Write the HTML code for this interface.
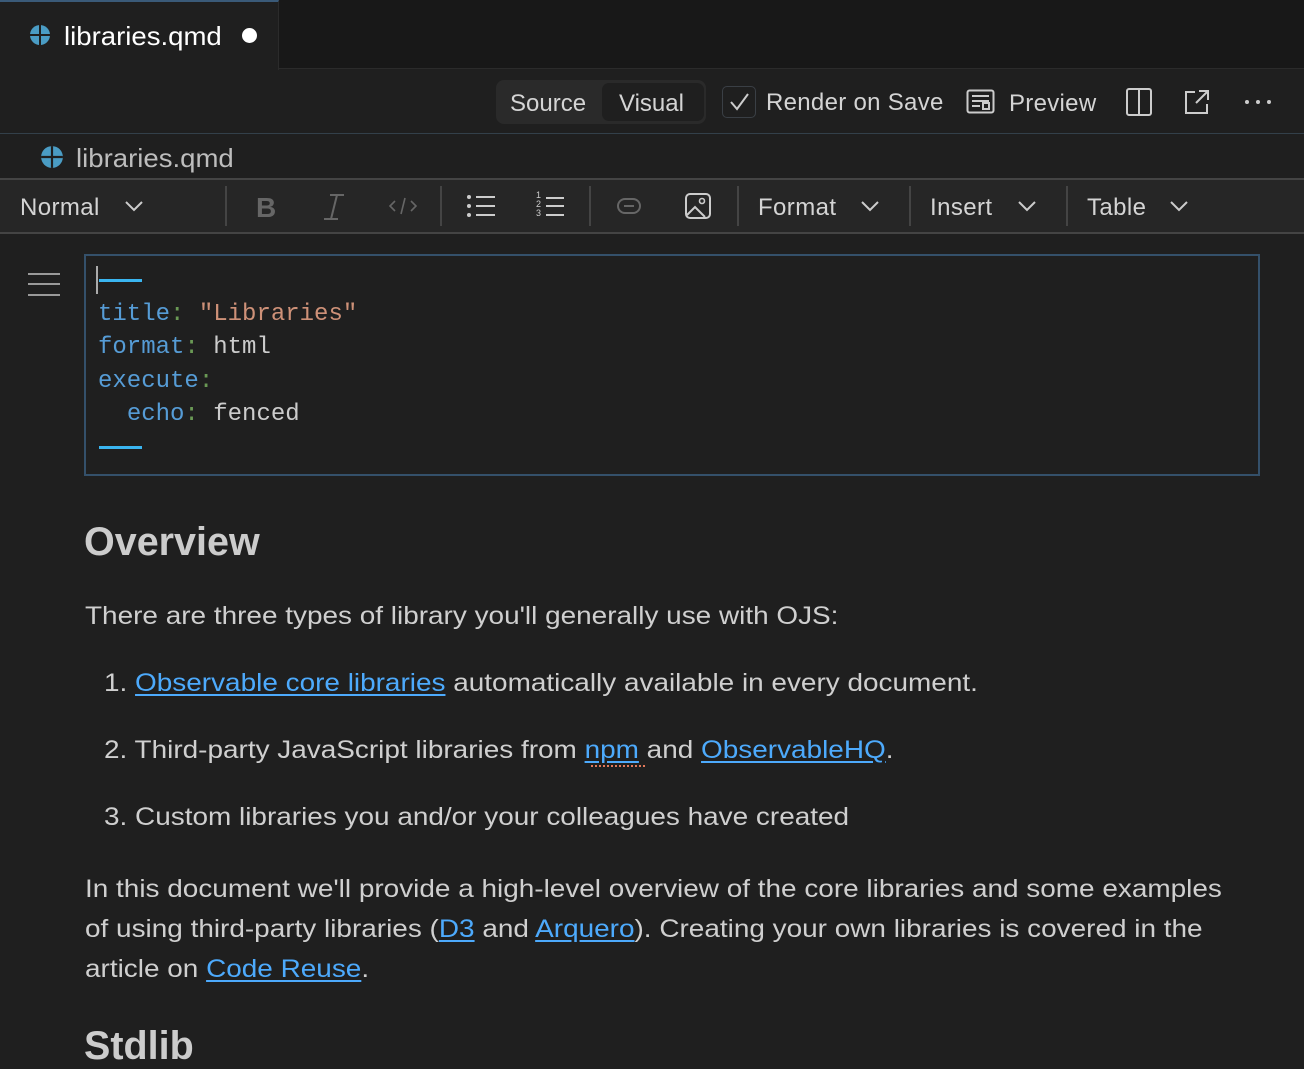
<!DOCTYPE html>
<html><head><meta charset="utf-8"><style>
*{margin:0;padding:0;box-sizing:border-box}
body{width:1304px;height:1046px;background:#1f1f1f;font-family:"Liberation Sans",Arial,sans-serif;color:#cccccc;position:relative;overflow:hidden}
.a{position:absolute;white-space:nowrap}
.t{font-size:25px;color:#cfcfcf;line-height:1;transform:scaleX(1.117);transform-origin:0 0}
a{color:#4daafc;text-decoration:underline;text-underline-offset:3px}
.m{font-family:"Liberation Mono",monospace;font-size:24px;line-height:1;white-space:pre}
.k{color:#569cd6}.c{color:#6a9955}.s{color:#ce9178}.d{color:#3ab5f0}
svg{position:absolute}
</style></head><body>
<div class="a" style="left:0;top:0;width:1304px;height:69px;background:#181818;border-bottom:1px solid #2b2b2b"></div>
<div class="a" style="left:0;top:0;width:279px;height:70px;background:#1f1f1f;border-top:2px solid #3a5a78;border-right:1px solid #2b2b2b"></div>
<svg style="left:29px;top:24px" width="22" height="22" viewBox="0 0 22 22"><circle cx="11" cy="11" r="10" fill="#4a9cc4"/><path d="M11 1v20M1 11h20" stroke="#1f1f1f" stroke-width="2"/></svg>
<div class="a" style="left:64px;top:21px;font-size:26px;color:#fff;transform:scaleX(1.06);transform-origin:0 0">libraries.qmd</div>
<div class="a" style="left:242px;top:28px;width:15px;height:15px;border-radius:50%;background:#fff"></div>

<div class="a" style="left:0;top:133px;width:1304px;height:1px;background:#33404a"></div>
<div class="a" style="left:496px;top:80px;width:210px;height:44px;border-radius:8px;background:#2a2a2a"></div>
<div class="a" style="left:602px;top:83px;width:102px;height:38px;border-radius:7px;background:#1f1f1f"></div>
<div class="a" style="left:510px;top:90px;font-size:24px;color:#d4d4d4">Source</div>
<div class="a" style="left:619px;top:90px;font-size:24px;color:#d4d4d4">Visual</div>
<div class="a" style="left:722px;top:86px;width:34px;height:32px;border:1px solid #3a3f45;border-radius:5px"></div>
<svg style="left:726px;top:90px" width="26" height="24"><path d="M5 12l6 7 11-15" stroke="#ccc" stroke-width="2" fill="none"/></svg>
<div class="a" style="left:766px;top:89px;font-size:24px;color:#d4d4d4;letter-spacing:0.3px">Render on Save</div>
<svg style="left:966px;top:89px" width="30" height="26"><rect x="1.5" y="1.5" width="26" height="22" rx="2" stroke="#ccc" stroke-width="2" fill="none"/><path d="M6 7h17M6 12h17v0M6 17h8M17 14h6v6h-6z" stroke="#ccc" stroke-width="2" fill="none"/></svg>
<div class="a" style="left:1009px;top:90px;font-size:24px;color:#d4d4d4;letter-spacing:0.3px">Preview</div>
<svg style="left:1125px;top:87px" width="28" height="30"><rect x="2" y="2" width="24" height="26" rx="2" stroke="#ccc" stroke-width="2" fill="none"/><path d="M14 2v26" stroke="#ccc" stroke-width="2"/></svg>
<svg style="left:1183px;top:88px" width="30" height="28"><path d="M12 4H3v21h21v-9M16 3h9v9M25 3L13 15" stroke="#ccc" stroke-width="2" fill="none"/></svg>
<div class="a" style="left:1245px;top:100px;width:4px;height:4px;border-radius:2px;background:#ccc;box-shadow:11px 0 #ccc,22px 0 #ccc"></div>

<svg style="left:40px;top:145px" width="24" height="24" viewBox="0 0 22 22"><circle cx="11" cy="11" r="10" fill="#4a9cc4"/><path d="M11 1v20M1 11h20" stroke="#1f1f1f" stroke-width="2"/></svg>
<div class="a" style="left:76px;top:143px;font-size:26px;color:#bdbdbd;transform:scaleX(1.06);transform-origin:0 0">libraries.qmd</div>

<div class="a" style="left:0;top:178px;width:1304px;height:56px;background:#262626;border-top:2px solid #444;border-bottom:2px solid #444"></div>
<div class="a" style="left:20px;top:194px;font-size:24px;color:#d4d4d4;letter-spacing:0.4px">Normal</div>
<svg style="left:124px;top:199px" width="20" height="14"><path d="M2 3l8 8 8-8" stroke="#ccc" stroke-width="2" fill="none"/></svg>
<div class="a" style="left:225px;top:186px;width:2px;height:40px;background:#444"></div>
<div class="a" style="left:256px;top:192px;font-size:28px;font-weight:bold;color:#666">B</div>
<svg style="left:322px;top:193px" width="24" height="28"><path d="M8 2h14M2 26h14M15 2L9 26" stroke="#666" stroke-width="2" fill="none"/></svg>
<svg style="left:388px;top:195px" width="30" height="22"><path d="M7 6l-5 5 5 5M23 6l5 5-5 5M17 3l-4 16" stroke="#666" stroke-width="1.6" fill="none"/></svg>
<div class="a" style="left:440px;top:186px;width:2px;height:40px;background:#444"></div>
<svg style="left:466px;top:194px" width="32" height="26"><g fill="#ccc"><circle cx="3" cy="3" r="2"/><circle cx="3" cy="12" r="2"/><circle cx="3" cy="21" r="2"/></g><path d="M10 3h19M10 12h19M10 21h19" stroke="#ccc" stroke-width="2"/></svg>
<div class="a" style="left:536px;top:191px;font-size:9px;line-height:9px;color:#ccc;text-align:center">1<br>2<br>3</div>
<svg style="left:544px;top:194px" width="22" height="26"><path d="M2 4h18M2 12h18M2 21h18" stroke="#ccc" stroke-width="2"/></svg>
<div class="a" style="left:589px;top:186px;width:2px;height:40px;background:#444"></div>
<svg style="left:616px;top:196px" width="28" height="20"><rect x="2" y="3" width="22" height="14" rx="7" stroke="#666" stroke-width="2" fill="none"/><path d="M8 10h10" stroke="#666" stroke-width="2"/></svg>
<svg style="left:684px;top:192px" width="28" height="28"><rect x="2" y="2" width="24" height="24" rx="4" stroke="#ccc" stroke-width="2" fill="none"/><circle cx="18" cy="9" r="2.5" stroke="#ccc" stroke-width="1.6" fill="none"/><path d="M3 23l8-8 10 10" stroke="#ccc" stroke-width="2" fill="none"/></svg>
<div class="a" style="left:737px;top:186px;width:2px;height:40px;background:#444"></div>
<div class="a" style="left:758px;top:194px;font-size:24px;color:#d4d4d4;letter-spacing:0.4px">Format</div>
<svg style="left:860px;top:199px" width="20" height="14"><path d="M2 3l8 8 8-8" stroke="#ccc" stroke-width="2" fill="none"/></svg>
<div class="a" style="left:909px;top:186px;width:2px;height:40px;background:#444"></div>
<div class="a" style="left:930px;top:194px;font-size:24px;color:#d4d4d4;letter-spacing:0.4px">Insert</div>
<svg style="left:1017px;top:199px" width="20" height="14"><path d="M2 3l8 8 8-8" stroke="#ccc" stroke-width="2" fill="none"/></svg>
<div class="a" style="left:1066px;top:186px;width:2px;height:40px;background:#444"></div>
<div class="a" style="left:1087px;top:194px;font-size:24px;color:#d4d4d4;letter-spacing:0.4px">Table</div>
<svg style="left:1169px;top:199px" width="20" height="14"><path d="M2 3l8 8 8-8" stroke="#ccc" stroke-width="2" fill="none"/></svg>

<svg style="left:27px;top:272px" width="34" height="26"><path d="M1 2h32M1 12h32M1 23h32" stroke="#999" stroke-width="2"/></svg>
<div class="a" style="left:84px;top:254px;width:1176px;height:222px;border:2px solid #34506a"></div>
<div class="a" style="left:96px;top:266px;width:2px;height:28px;background:#aaa"></div>
<div class="a" style="left:99px;top:279px;width:43px;height:3px;background:#3ab5f0"></div>
<div class="a m" style="left:98px;top:303px"><span class="k">title</span><span class="c">:</span> <span class="s">"Libraries"</span></div>
<div class="a m" style="left:98px;top:336px"><span class="k">format</span><span class="c">:</span> html</div>
<div class="a m" style="left:98px;top:370px"><span class="k">execute</span><span class="c">:</span></div>
<div class="a m" style="left:98px;top:403px">  <span class="k">echo</span><span class="c">:</span> fenced</div>
<div class="a" style="left:99px;top:446px;width:43px;height:3px;background:#3ab5f0"></div>

<div class="a" style="left:84px;top:520px;font-size:39.5px;font-weight:bold;color:#cccccc">Overview</div>
<div class="a t" style="left:85px;top:604px">There are three types of library you'll generally use with OJS:</div>
<div class="a t" style="left:104px;top:671px">1. <a>Observable core libraries</a> automatically available in every document.</div>
<div class="a t" style="left:104px;top:738px">2. Third-party JavaScript libraries from <a>npm</a> and <a>ObservableHQ</a>.</div>
<div class="a" style="left:591px;top:765px;width:54px;border-top:2px dotted #e0785a"></div>
<div class="a t" style="left:104px;top:805px">3. Custom libraries you and/or your colleagues have created</div>
<div class="a t" style="left:85px;top:877px">In this document we'll provide a high-level overview of the core libraries and some examples</div>
<div class="a t" style="left:85px;top:917px">of using third-party libraries (<a>D3</a> and <a>Arquero</a>). Creating your own libraries is covered in the</div>
<div class="a t" style="left:85px;top:957px">article on <a>Code Reuse</a>.</div>
<div class="a" style="left:84px;top:1024px;font-size:39.5px;font-weight:bold;color:#cccccc">Stdlib</div>
</body></html>
